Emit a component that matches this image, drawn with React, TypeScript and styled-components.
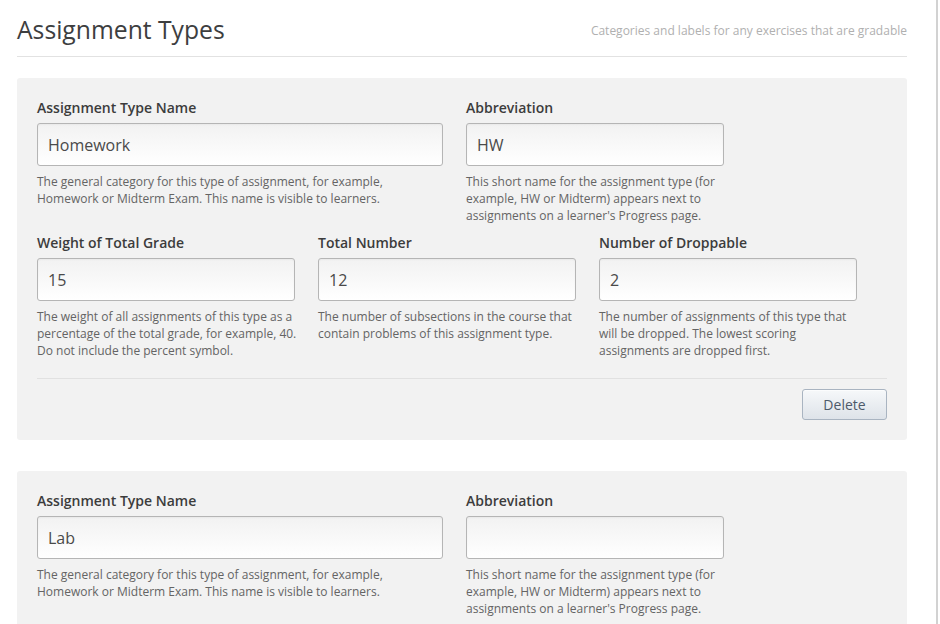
import * as React from 'react';
import styled, { createGlobalStyle } from 'styled-components';

const GlobalStyle = createGlobalStyle`
    html, body {
        margin: 0;
        padding: 0;
        background: #ffffff;
    }
    body {
        font-family: "Open Sans", "Liberation Sans", sans-serif;
        color: #3c3c3c;
    }
`;

interface Field {
    label: string;
    value: string;
    help: string;
    wide?: boolean;
}

interface AssignmentType {
    id: number;
    fields: Field[][];
    deletable: boolean;
}

const NAME_HELP = 'The general category for this type of assignment, for example, Homework or Midterm Exam. This name is visible to learners.';
const ABBR_HELP = "This short name for the assignment type (for example, HW or Midterm) appears next to assignments on a learner's Progress page.";

const assignmentTypes: AssignmentType[] = [
    {
        id: 1,
        deletable: true,
        fields: [
            [
                { label: 'Assignment Type Name', value: 'Homework', help: NAME_HELP, wide: true },
                { label: 'Abbreviation', value: 'HW', help: ABBR_HELP }
            ],
            [
                {
                    label: 'Weight of Total Grade',
                    value: '15',
                    help: 'The weight of all assignments of this type as a percentage of the total grade, for example, 40. Do not include the percent symbol.'
                },
                {
                    label: 'Total Number',
                    value: '12',
                    help: 'The number of subsections in the course that contain problems of this assignment type.'
                },
                {
                    label: 'Number of Droppable',
                    value: '2',
                    help: 'The number of assignments of this type that will be dropped. The lowest scoring assignments are dropped first.'
                }
            ]
        ]
    },
    {
        id: 2,
        deletable: true,
        fields: [
            [
                { label: 'Assignment Type Name', value: 'Lab', help: NAME_HELP, wide: true },
                { label: 'Abbreviation', value: '', help: ABBR_HELP }
            ]
        ]
    }
];

const Page = styled.div`
    box-sizing: border-box;
    width: 938px;
    height: 624px;
    overflow: hidden;
    border-right: 2px solid #d2d2d2;
    padding: 0 29px 0 17px;
`;

const Header = styled.header`
    display: flex;
    align-items: center;
    justify-content: space-between;
    height: 56px;
    border-bottom: 1px solid #e2e2e2;
    margin-bottom: 21px;
`;

const Title = styled.h1`
    margin: 0;
    padding-top: 2px;
    font-size: 24.7px;
    font-weight: 400;
    color: #3d3e3f;
`;

const Subtitle = styled.span`
    padding-top: 4px;
    font-size: 12px;
    color: #b0b0b0;
`;

const Card = styled.section`
    background: #f2f2f2;
    border-radius: 3px;
    padding: 20px 20px 20px;
    margin-bottom: 31px;
`;

const FieldRow = styled.div<{ $cols: string }>`
    display: grid;
    grid-template-columns: ${(props) => props.$cols};
    column-gap: 23px;
    & + & {
        margin-top: 9px;
    }
`;

const FieldBox = styled.div`
    display: flex;
    flex-direction: column;
    min-width: 0;
`;

const Label = styled.label`
    font-size: 14px;
    line-height: 20px;
    font-weight: 600;
    color: #3c3c3c;
    margin-bottom: 5px;
`;

const Input = styled.input`
    box-sizing: border-box;
    height: 43px;
    width: 100%;
    padding: 0 10px;
    font-family: "Open Sans", "Liberation Sans", sans-serif;
    font-size: 16px;
    color: #4a4a4a;
    border: 1px solid #b5b5b5;
    border-radius: 3px;
    background: linear-gradient(to bottom, #f2f2f2 0%, #ffffff 100%);
    box-shadow: inset 0 1px 2px rgba(0, 0, 0, 0.04);
    outline: none;
`;

const Help = styled.p<{ $wide?: boolean }>`
    margin: 7px 0 0;
    width: ${(props) => (props.$wide ? '385px' : '264px')};
    font-size: 12px;
    line-height: 17px;
    color: #646464;
`;

const Actions = styled.div`
    display: flex;
    justify-content: flex-end;
    margin-top: 19px;
    padding-top: 10px;
    border-top: 1px solid #e1e1e1;
`;

const DeleteButton = styled.button`
    box-sizing: border-box;
    width: 85px;
    height: 31px;
    font-family: "Open Sans", "Liberation Sans", sans-serif;
    font-size: 14px;
    color: #4d5a6a;
    border: 1px solid #a9b4c1;
    border-radius: 3px;
    background: linear-gradient(to bottom, #f6f8fa 0%, #dee3e9 100%);
    box-shadow: inset 0 1px 0 rgba(255, 255, 255, 0.6);
    cursor: pointer;
`;

function renderField(field: Field): JSX.Element {
    return (
        <FieldBox key={field.label}>
            <Label>{field.label}</Label>
            <Input type="text" defaultValue={field.value} />
            <Help $wide={field.wide}>{field.help}</Help>
        </FieldBox>
    );
}

function AssignmentCard(props: { item: AssignmentType }): JSX.Element {
    const { item } = props;

    return (
        <Card>
            {item.fields.map((row, index) => (
                <FieldRow key={index} $cols={row.length === 2 ? '406px 258px' : '258px 258px 258px'}>
                    {row.map(renderField)}
                </FieldRow>
            ))}
            {item.deletable && item.fields.length > 1 && (
                <Actions>
                    <DeleteButton type="button">Delete</DeleteButton>
                </Actions>
            )}
        </Card>
    );
}

export default function App(): JSX.Element {
    return (
        <>
            <GlobalStyle />
            <Page>
                <Header>
                    <Title>Assignment Types</Title>
                    <Subtitle>Categories and labels for any exercises that are gradable</Subtitle>
                </Header>
                {assignmentTypes.map((item) => (
                    <AssignmentCard key={item.id} item={item} />
                ))}
            </Page>
        </>
    );
}
